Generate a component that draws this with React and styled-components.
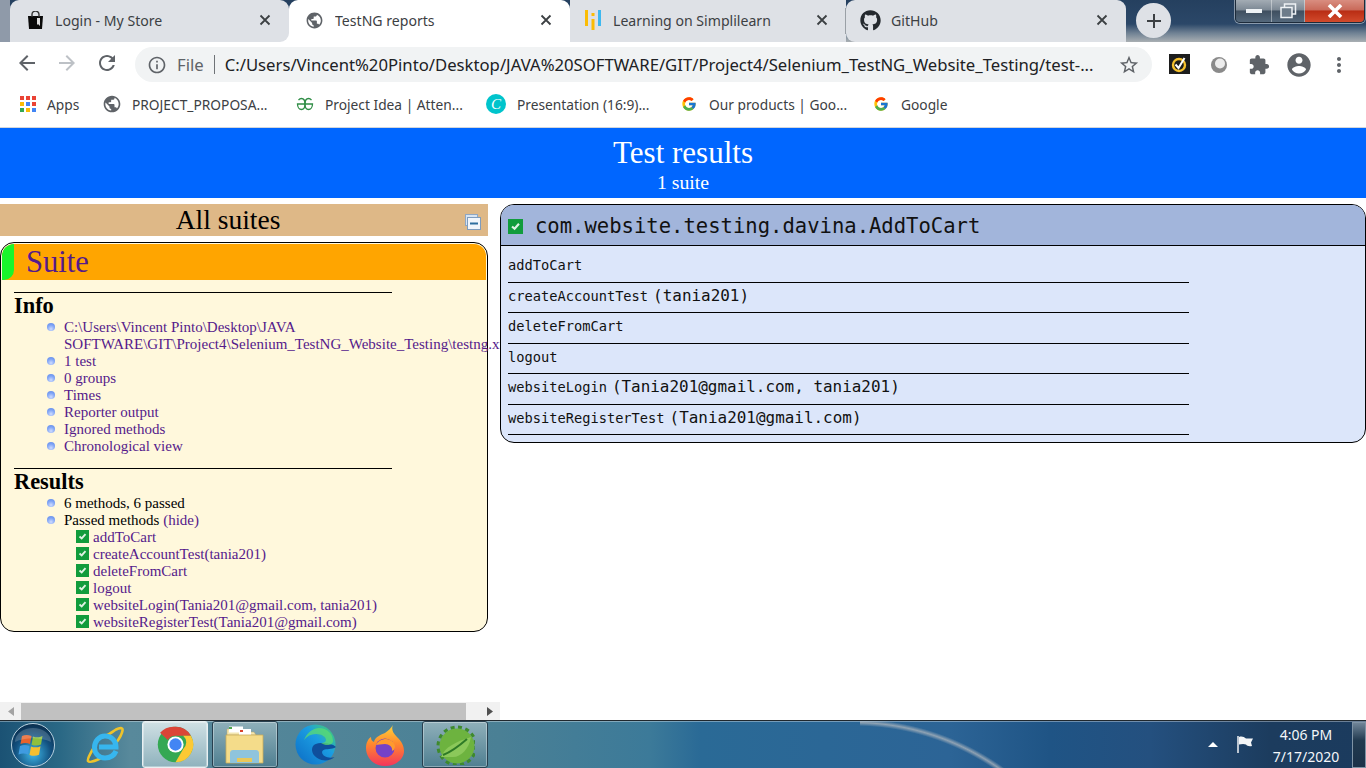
import React from "react";
import styled, { createGlobalStyle } from "styled-components";
import { FaGithub } from "react-icons/fa";
import { FcGoogle } from "react-icons/fc";

const Global = createGlobalStyle`
  html, body { margin: 0; padding: 0; background: #fff; overflow: hidden; }
  * { box-sizing: border-box; }
`;

const PATHS = {
  back: "M20 11H7.83l5.59-5.59L12 4l-8 8 8 8 1.41-1.41L7.83 13H20v-2z",
  refresh:
    "M17.65 6.35C16.2 4.9 14.21 4 12 4c-4.42 0-7.99 3.58-7.99 8s3.57 8 7.99 8c3.73 0 6.84-2.55 7.73-6h-2.08c-.82 2.33-3.04 4-5.65 4-3.31 0-6-2.69-6-6s2.69-6 6-6c1.66 0 3.14.69 4.22 1.78L13 11h7V4l-2.35 2.35z",
  info: "M11 7h2v2h-2zm0 4h2v6h-2zm1-9C6.48 2 2 6.48 2 12s4.48 10 10 10 10-4.48 10-10S17.52 2 12 2zm0 18c-4.41 0-8-3.59-8-8s3.59-8 8-8 8 3.59 8 8-3.59 8-8 8z",
  star: "M22 9.24l-7.19-.62L12 2 9.19 8.63 2 9.24l5.46 4.73L5.82 21 12 17.27 18.18 21l-1.63-7.03L22 9.24zM12 15.4l-3.76 2.27 1-4.28-3.32-2.88 4.38-.38L12 6.1l1.71 4.04 4.38.38-3.32 2.88 1 4.28L12 15.4z",
  puzzle:
    "M20.5 11H19V7c0-1.1-.9-2-2-2h-4V3.5C13 2.12 11.88 1 10.5 1S8 2.12 8 3.5V5H4c-1.1 0-1.99.9-1.99 2v3.8H3.5c1.49 0 2.7 1.21 2.7 2.7s-1.21 2.7-2.7 2.7H2V20c0 1.1.9 2 2 2h3.8v-1.5c0-1.49 1.21-2.7 2.7-2.7 1.49 0 2.7 1.21 2.7 2.7V22H17c1.1 0 2-.9 2-2v-4h1.5c1.38 0 2.5-1.12 2.5-2.5S21.88 11 20.5 11z",
  account:
    "M12 2C6.48 2 2 6.48 2 12s4.48 10 10 10 10-4.48 10-10S17.52 2 12 2zm0 3c1.66 0 3 1.34 3 3s-1.34 3-3 3-3-1.34-3-3 1.34-3 3-3zm0 14.2c-2.5 0-4.71-1.28-6-3.22.03-1.99 4-3.08 6-3.08 1.99 0 5.97 1.09 6 3.08-1.29 1.94-3.5 3.22-6 3.22z",
  globe:
    "M12 2C6.48 2 2 6.48 2 12s4.48 10 10 10 10-4.48 10-10S17.52 2 12 2zm-1 17.93c-3.95-.49-7-3.85-7-7.93 0-.62.08-1.21.21-1.79L9 15v1c0 1.1.9 2 2 2v1.93zm6.9-2.54c-.26-.81-1-1.39-1.9-1.39h-1v-3c0-.55-.45-1-1-1H8v-2h2c.55 0 1-.45 1-1V7h2c1.1 0 2-.9 2-2v-.41c2.93 1.19 5 4.06 5 7.41 0 2.08-.8 3.97-2.1 5.39z",
  dots: "M12 8c1.1 0 2-.9 2-2s-.9-2-2-2-2 .9-2 2 .9 2 2 2zm0 2c-1.1 0-2 .9-2 2s.9 2 2 2 2-.9 2-2-.9-2-2-2zm0 6c-1.1 0-2 .9-2 2s.9 2 2 2 2-.9 2-2-.9-2-2-2z",
};

const Mat = ({ name, size = 24, color = "#5f6368", flip }) => (
  <svg width={size} height={size} viewBox="0 0 24 24" fill={color} style={flip ? { transform: "scaleX(-1)" } : undefined}>
    <path d={PATHS[name]} />
  </svg>
);

const CloseX = () => (
  <svg width="12" height="12" viewBox="0 0 12 12" stroke="#3c4043" strokeWidth="1.8" fill="none">
    <path d="M1.5 1.5l9 9M10.5 1.5l-9 9" />
  </svg>
);

const BagIcon = () => (
  <svg width="17" height="18" viewBox="0 0 17 18">
    <path d="M1 5h15l-1 13H2z" fill="#0a0a0a" />
    <path d="M5 6V3.5a3.5 3.5 0 0 1 7 0V6" fill="none" stroke="#333" strokeWidth="1.4" />
    <path d="M10 7h3v8l-2-2-1 1z" fill="#ddd" />
  </svg>
);

const SimplilearnIcon = () => (
  <svg width="16" height="20" viewBox="0 0 16 20">
    <rect x="0" y="0" width="3" height="16" fill="#fbbc05" />
    <rect x="6.5" y="9" width="3" height="11" fill="#fbbc05" />
    <rect x="6.5" y="3" width="3" height="3" fill="#fbbc05" />
    <rect x="13" y="0" width="3" height="16" fill="#3db8f0" />
  </svg>
);

const AppsIcon = () => (
  <svg width="16" height="16" viewBox="0 0 16 16">
    {["#ea4335", "#ea4335", "#ea4335", "#fbbc05", "#4285f4", "#ea4335", "#34a853", "#fbbc05", "#4285f4"].map((c, i) => (
      <rect key={i} x={(i % 3) * 6} y={Math.floor(i / 3) * 6} width="4" height="4" fill={c} />
    ))}
  </svg>
);

const GfgIcon = () => (
  <svg width="18" height="18" viewBox="0 0 18 18" fill="none" stroke="#2f8d46" strokeWidth="1.3">
    <path d="M9 9H1.5c0 3 1.700 5.500 4 5.500 1.800 0 3.500-2 3.500-5.500 0-3.500-1.500-5.500-3.500-5.500-1.300 0-2.200.6-3 1.700" />
    <path d="M9 9h7.500c0 3-1.700 5.500-4 5.500-1.800 0-3.500-2-3.500-5.500 0-3.500 1.500-5.500 3.500-5.500 1.300 0 2.200.6 3 1.700" />
  </svg>
);

const NortonIcon = () => (
  <svg width="21" height="21" viewBox="0 0 21 21">
    <rect width="21" height="20" fill="#1c1c1c" />
    <circle cx="10" cy="11" r="6" fill="none" stroke="#f5c02c" strokeWidth="2.4" />
    <path d="M6.500 10.500l3 3.500 6-10" fill="none" stroke="#fff" strokeWidth="2" />
  </svg>
);

const SphereIcon = () => (
  <svg width="18" height="18" viewBox="0 0 18 18">
    <circle cx="9" cy="9" r="8" fill="#8a8a8a" />
    <circle cx="10" cy="7.500" r="5" fill="#ececec" />
  </svg>
);

const PassIcon = ({ size = 13 }) => (
  <svg width={size} height={size} viewBox="0 0 13 13">
    <rect width="13" height="13" fill="#119c3c" />
    <path d="M3.500 6.500l2.200 2L9.500 4.200" fill="none" stroke="#dff2e4" strokeWidth="1.900" />
  </svg>
);

const CollapseIcon = () => (
  <svg width="16" height="16" viewBox="0 0 16 16">
    <rect x="0.500" y="0.500" width="12" height="11" fill="#d7e4f2" stroke="#8fa7c3" />
    <rect x="2.500" y="3.500" width="13" height="12" fill="#f2f6fb" stroke="#7f9cbd" />
    <rect x="5" y="8.500" width="8" height="2" fill="#2f6f9f" />
  </svg>
);

const WindowsOrb = () => (
  <svg width="46" height="46" viewBox="0 0 46 46">
    <defs>
      <radialGradient id="orb" cx="50%" cy="70%" r="70%">
        <stop offset="0" stopColor="#3fb8e8" />
        <stop offset="0.6" stopColor="#12507f" />
        <stop offset="1" stopColor="#0a2c4a" />
      </radialGradient>
    </defs>
    <circle cx="23" cy="23" r="21.500" fill="url(#orb)" stroke="#b9d2e0" strokeWidth="1" />
    <path d="M12 14c3-1.500 6-1.500 9.500 0l-1.500 8c-3-1.200-6-1.200-9.500 0z" fill="#e8632c" />
    <path d="M23 14.500c3 1.200 6.500 1.200 9.500-.5l-1.500 8.500c-3 1.400-6 1.400-9.500.2z" fill="#8fc03c" />
    <path d="M10 24c3-1.200 6-1.200 9.500 0l-1.500 8.500c-3-1.400-6-1.400-9.500 0z" fill="#3f9be0" />
    <path d="M21 24.500c3 1.200 6.500 1.200 9.500-.3l-1.500 8.500c-3 1.500-6 1.500-9.500.2z" fill="#f5bf2e" />
    <path d="M5 20a18 14 0 0 1 36 0c-10-5-26-5-36 0z" fill="#fff" opacity="0.18" />
  </svg>
);

const IeIcon = () => (
  <svg width="38" height="40" viewBox="0 0 38 40" fill="none">
    <path d="M19 11c4-1 7-4 11-6.500 4-2 7-2 6.500 1C36 9 33 14 30 18M7 24c-3 5-6 10-5 12 1.500 2 7 0 13-3" stroke="#eec32b" strokeWidth="2.600" />
    <path d="M30 26c-2 5-6.500 7-11 7-6 0-10.500-4.500-10.500-10.500S13 11 19 11s11 4.500 11 11H13" stroke="#37b6ee" strokeWidth="5" />
  </svg>
);

const ChromeIcon = () => (
  <svg width="37" height="37" viewBox="0 0 48 48">
    <circle cx="24" cy="24" r="23" fill="#34a853" />
    <path d="M24 1a23 23 0 0 1 20 11.500H24a11.500 11.500 0 0 0-10 5.800L4 8.800A23 23 0 0 1 24 1z" fill="#db4437" />
    <path d="M44 12.500A23 23 0 0 1 24 47l10-17.200a11.500 11.500 0 0 0 0-17.300z" fill="#fcc934" />
    <circle cx="24" cy="24" r="10.500" fill="#fff" />
    <circle cx="24" cy="24" r="8" fill="#4285f4" />
  </svg>
);

const FolderIcon = () => (
  <svg width="40" height="40" viewBox="0 0 40 40">
    <path d="M2 4h14l3 3h10l2 3H2z" fill="#f3e6b0" stroke="#b9a468" strokeWidth="0.500" />
    <rect x="4" y="1.500" width="14" height="6" fill="#fff" />
    <rect x="14" y="4" width="12" height="6" fill="#fff" />
    <rect x="4" y="2" width="3" height="2" fill="#4da64a" />
    <rect x="15" y="5" width="3" height="2" fill="#d8432e" />
    <path d="M1 10h37v28H1z" fill="#f4dc8a" stroke="#c9ac5c" strokeWidth="0.800" />
    <path d="M5 28c0-1.500 1-3 3-3h23c2 0 3 1.500 3 3v10H5z" fill="#8fc4dc" />
    <rect x="12" y="33" width="15" height="4" fill="#e9c85a" />
  </svg>
);

const EdgeIcon = () => (
  <svg width="41" height="41" viewBox="0 0 41 41">
    <defs>
      <linearGradient id="edgeA" x1="0" y1="1" x2="1" y2="0">
        <stop offset="0" stopColor="#0c6bc4" />
        <stop offset="0.6" stopColor="#1b9de2" />
        <stop offset="1" stopColor="#4fd65d" />
      </linearGradient>
    </defs>
    <circle cx="20.500" cy="20.500" r="20" fill="url(#edgeA)" />
    <path d="M41 23c-3-3-9-4-15-4-4 0-7 1-8.500 4-2 5 2 11 9 13 5 1 10 0 13-3-3 1-7 1-10-1-3-2-3-5-1-6 3-1.500 8 0 12.500-3z" fill="#0f4f9c" />
    <path d="M38 17c0 5-8 5-12 2 3 0 5-1 5-3 0-3-4-6-10-6-5 0-9 2-12 6 3-8 10-12 15-12 8 0 14 6 14 13z" fill="#5ee06c" opacity="0.700" />
  </svg>
);

const FirefoxIcon = () => (
  <svg width="40" height="42" viewBox="0 0 40 42">
    <defs>
      <linearGradient id="fx" x1="0.500" y1="0" x2="0.500" y2="1">
        <stop offset="0" stopColor="#ffd43b" />
        <stop offset="0.450" stopColor="#ff8a2e" />
        <stop offset="1" stopColor="#f3355c" />
      </linearGradient>
    </defs>
    <path d="M28 1c-2 4 0 8 4 12 5 5 7 9 7 14 0 8-8 15-19 15C9 42 1 34 1 24c0-5 2-9 5-11 0 3 1 4 3 5 1-5 6-7 11-9 3-2 6-5 8-8z" fill="url(#fx)" />
    <circle cx="20" cy="24" r="9.500" fill="#7542c7" />
    <path d="M11 21c2-4 6-6 10-6 5 0 9 4 9 8 0 2-1 3-3 4 1-4-3-7-7-7-4 0-7 1-9 1z" fill="#ff9a2e" />
  </svg>
);

const SpringIcon = () => (
  <svg width="40" height="40" viewBox="0 0 40 40">
    <circle cx="22" cy="21" r="17.500" fill="#6db33f" />
    <circle cx="22" cy="21" r="19" fill="none" stroke="#3e8a2c" strokeWidth="3" strokeDasharray="4 3.500" />
    <path d="M6 32c4-10 14-15 30-20-2 12-10 20-18 20-4 0-8 0-12 0z" fill="#8bc85a" />
    <path d="M8 30c8-3 16-9 24-16" stroke="#2e7a26" strokeWidth="2" fill="none" />
  </svg>
);

const FlagIcon = () => (
  <svg width="19" height="19" viewBox="0 0 19 19">
    <path d="M2 1v17" stroke="#fff" strokeWidth="1.400" />
    <path d="M3 2c3-1 5 0 7 1.500h7l-2 4 1 3.500c-3 .5-5 0-6-1.500-2-1-5-.5-7 0z" fill="#f4f6f8" />
  </svg>
);

const Page = styled.div`
  width: 1366px;
  height: 768px;
  display: flex;
  flex-direction: column;
  overflow: hidden;
  background: #fff;
`;

const TabStrip = styled.div`
  height: 42px;
  flex: none;
  display: flex;
  padding-left: 10px;
  isolation: isolate;
  background:
    linear-gradient(90deg, #8f9aa9 0, #8f9aa9 10px, transparent 10px),
    linear-gradient(180deg, #25405f 0, #2b4768 24px, #6f8193 33px, #a9afb3 42px);
`;

const Tab = styled.div`
  position: relative;
  flex: none;
  width: ${(p) => p.$width}px;
  display: flex;
  align-items: center;
  gap: ${(p) => p.$gap || 12}px;
  padding: 0 18px 2px ${(p) => p.$pad || 16}px;
  border-radius: 9px 9px ${(p) => (p.$active ? "0 0" : p.$round || "0 0")};
  background: ${(p) => (p.$active ? "#fff" : "#dee1e6")};
  ${(p) => !p.$active && "z-index: 1;"}
  ${(p) =>
    p.$active &&
    `&::before, &::after { content: ""; position: absolute; bottom: 0; width: 10px; height: 10px; background: #fff; z-index: -1; }
     &::before { left: -9px; }
     &::after { right: -9px; }`}
  ${(p) =>
    p.$divider &&
    `&::before { content: ""; position: absolute; left: -1px; top: 8px; height: 26px; width: 1px; background: #9aa0a6; }`}
`;

const TabTitle = styled.span`
  flex: 1;
  font: 14.100px "Noto Sans", sans-serif;
  color: #3c4043;
  white-space: nowrap;
  overflow: hidden;
`;

const NewTab = styled.div`
  width: 35px;
  height: 35px;
  margin: 3px 0 0 10px;
  flex: none;
  border-radius: 50%;
  background: #dee1e6;
  display: flex;
  align-items: center;
  justify-content: center;
  color: #3c4043;
`;

const WindowButtons = styled.div`
  margin-left: auto;
  margin-right: 1px;
  width: 130px;
  height: 23px;
  flex: none;
  display: grid;
  grid-template-columns: 36px 33px 61px;
  border: 1px solid #1d2b3a;
  border-top: 0;
  border-radius: 0 0 5px 5px;
  overflow: hidden;
  box-shadow: 0 0 0 1px rgba(255, 255, 255, 0.45);
`;

const WindowButton = styled.div`
  display: flex;
  align-items: center;
  justify-content: center;
  border-right: 1px solid rgba(255, 255, 255, 0.4);
  background: ${(p) =>
    p.$close
      ? "linear-gradient(180deg, #d98d80 0, #c96a5a 45%, #b92d14 50%, #d24a2c 100%)"
      : "linear-gradient(180deg, #a3acb4 0, #7c8894 45%, #3f4f60 50%, #54687b 100%)"};
`;

const Toolbar = styled.div`
  height: 42px;
  flex: none;
  display: flex;
  align-items: center;
  padding: 0 0 0 15px;
  background: #fff;
`;

const NavButton = styled.div`
  width: 40px;
  display: flex;
  justify-content: flex-start;
  flex: none;
`;

const Omnibox = styled.div`
  width: 1017px;
  height: 35px;
  margin: 3px 0 0 0;
  flex: none;
  display: flex;
  align-items: center;
  padding: 0 12px 0 12px;
  border-radius: 18px;
  background: #f1f3f4;
  font: 16.700px "Noto Sans", sans-serif;
  white-space: nowrap;
`;

const Scheme = styled.span`
  color: #5f6368;
  margin-left: 10px;
`;

const SchemeBar = styled.span`
  width: 1px;
  height: 19px;
  margin: 0 10px 0 10px;
  background: #6f7377;
`;

const Address = styled.span`
  flex: 1;
  color: #202124;
  overflow: hidden;
`;

const ToolActions = styled.div`
  flex: none;
  display: grid;
  grid-template-columns: repeat(5, 40px);
  justify-items: center;
  align-items: center;
  padding: 3px 0 0 7px;
`;

const Bookmarks = styled.div`
  height: 44px;
  flex: none;
  display: flex;
  align-items: center;
  padding: 0 0 3px 20px;
  background: #fff;
  border-bottom: 1px solid #d2d6dc;
`;

const Bookmark = styled.div`
  display: flex;
  align-items: center;
  gap: ${(p) => p.$gap || 11}px;
  width: ${(p) => p.$width}px;
  flex: none;
  font: 13.750px "Noto Sans", sans-serif;
  color: #3c4043;
  white-space: nowrap;
`;

const CanvaBadge = styled.span`
  width: 20px;
  height: 20px;
  border-radius: 50%;
  background: #00c4cc;
  color: #fff;
  font: italic 15px "Liberation Serif", serif;
  display: flex;
  align-items: center;
  justify-content: center;
`;

const Report = styled.div`
  flex: 1;
  min-height: 0;
  display: flex;
  flex-direction: column;
  font-family: "Liberation Serif", serif;
`;

const Banner = styled.header`
  height: 70px;
  flex: none;
  padding-top: 6px;
  background: #0066ff;
  color: #fff;
  text-align: center;
`;

const BannerTitle = styled.div`
  font-size: 31px;
  line-height: 38px;
`;

const BannerSub = styled.div`
  font-size: 19.800px;
  line-height: 21px;
`;

const Columns = styled.div`
  flex: 1;
  min-height: 0;
  display: flex;
`;

const LeftColumn = styled.div`
  width: 500px;
  flex: none;
  display: flex;
  flex-direction: column;
  padding-top: 6px;
`;

const Scroller = styled.div`
  flex: 1;
  min-height: 0;
  overflow: hidden;
`;

const AllSuites = styled.div`
  width: 488px;
  height: 32px;
  display: flex;
  align-items: center;
  background: #deb887;
  font-size: 27.500px;
`;

const AllSuitesTitle = styled.span`
  flex: 1;
  text-align: center;
`;

const CollapseSlot = styled.span`
  width: 32px;
  flex: none;
  display: flex;
  padding: 3px 0 0 9px;
`;

const SuitePanel = styled.div`
  width: 488px;
  height: 390px;
  margin-top: 6px;
  padding: 1px;
  border: 1px solid #000;
  border-radius: 14px;
  background: #fff8dc;
  font-size: 15px;
  line-height: 17px;
`;

const SuiteHeader = styled.div`
  height: 36px;
  display: flex;
  border-radius: 12px 12px 0 0;
  background: #ffa500;
  overflow: hidden;
`;

const SuiteMark = styled.span`
  width: 12px;
  flex: none;
  border-radius: 10px 0 10px 0;
  background: #19f52b;
`;

const SuiteName = styled.span`
  margin-left: 12px;
  font-size: 30.600px;
  line-height: 36px;
  color: #551a8b;
`;

const Section = styled.section`
  padding-left: 12px;
`;

const Rule = styled.hr`
  width: 378px;
  height: 1px;
  margin: ${(p) => p.$top}px 0 0;
  border: 0;
  background: #000;
`;

const SectionTitle = styled.div`
  height: 26px;
  font-size: 22.400px;
  font-weight: bold;
  line-height: 26px;
`;

const Bullets = styled.ul`
  margin: 0;
  padding: 0 0 0 50px;
  list-style: none;
`;

const Bullet = styled.li`
  position: relative;
  color: ${(p) => (p.$plain ? "#000" : "#551a8b")};

  &::before {
    content: "";
    position: absolute;
    left: -17px;
    top: 4px;
    width: 8px;
    height: 8px;
    border-radius: 50%;
    background: radial-gradient(circle at 50% 75%, #cfdcff 0, #7ea3f5 55%, #5f8ae8 100%);
  }
`;

const Link = styled.span`
  color: #551a8b;
`;

const Methods = styled.div`
  padding-left: 62px;
`;

const Method = styled.div`
  display: flex;
  align-items: center;
  gap: 4px;
  height: 17px;
  color: #551a8b;
  white-space: nowrap;

  svg {
    margin-top: -3px;
  }
`;

const ScrollBar = styled.div`
  height: 18px;
  flex: none;
  display: flex;
  align-items: stretch;
  padding-top: 1px;
  background: #f1f1f1;
`;

const ScrollArrow = styled.div`
  width: 21px;
  flex: none;
  display: flex;
  align-items: center;
  justify-content: center;
`;

const ScrollThumb = styled.div`
  width: 445px;
  flex: none;
  background: #c1c1c1;
`;

const ScrollTrack = styled.div`
  flex: 1;
  display: flex;
  justify-content: flex-end;
`;

const RightColumn = styled.div`
  flex: 1;
  min-width: 0;
  padding-top: 6px;
`;

const ClassPanel = styled.div`
  height: 239px;
  border: 1px solid #000;
  border-radius: 14px;
  overflow: hidden;
  background: #dce6fa;
  font-family: "DejaVu Sans Mono", monospace;
  color: #111;
`;

const ClassHeader = styled.div`
  height: 41px;
  display: flex;
  align-items: center;
  gap: 12px;
  padding: 2px 0 0 7px;
  background: #a2b5db;
  border-bottom: 1px solid #000;
  font-size: 20.550px;
`;

const ClassRows = styled.div`
  padding: 6.200px 0 0 7px;
`;

const ClassRow = styled.div`
  width: 681px;
  height: 30.500px;
  display: flex;
  align-items: baseline;
  gap: 5px;
  padding-top: 2px;
  border-bottom: 1px solid #000;
  font-size: 13.700px;
  line-height: 22px;
`;

const Params = styled.span`
  font-size: 15.950px;
`;

const Taskbar = styled.footer`
  height: 48px;
  flex: none;
  display: flex;
  align-items: center;
  border-top: 1px solid #20282e;
  box-shadow: inset 0 1px 0 rgba(255, 255, 255, 0.35);
  background:
    radial-gradient(circle at -6px 254px, transparent 249px, rgba(195, 195, 195, 0.65) 252.500px, transparent 256px) 860px 0 / 200px 100% no-repeat,
    linear-gradient(90deg, #1b5274 0, #2a6885 60px, #58899b 130px, #4a8095 500px, #3c7a99 650px, #2a6a96 700px, #2c6496 950px, #1f5485 1050px, #24507f 1150px, #1c3c5e 1270px, #1b3b5e 1366px);
`;

const StartOrb = styled.div`
  width: 72px;
  flex: none;
  display: flex;
  padding-left: 10px;
`;

const TaskSlot = styled.div`
  width: 66px;
  height: 47px;
  margin-right: 4px;
  flex: none;
  display: flex;
  align-items: center;
  justify-content: center;
  border-radius: 3px;
  ${(p) =>
    p.$open &&
    `border: 1px solid ${p.$front ? "#e8f0f2" : "#27404f"};
     box-shadow: inset 0 0 0 1px rgba(255,255,255,0.35);
     background: linear-gradient(180deg, ${p.$front ? "#cfe0e4, #8fb2bd" : "#8fb0ba, #4f7f91"});`}
`;

const Tray = styled.div`
  margin-left: auto;
  display: flex;
  align-items: center;
  height: 100%;
`;

const TrayArrow = styled.span`
  width: 0;
  height: 0;
  margin-right: 18px;
  border-left: 5px solid transparent;
  border-right: 5px solid transparent;
  border-bottom: 5px solid #fff;
`;

const Clock = styled.div`
  width: 92px;
  margin-left: 5px;
  padding-top: 3px;
  color: #f4f7fa;
  font: 14px/22px "Noto Sans", sans-serif;
  text-align: center;
`;

const ShowDesktop = styled.div`
  width: 14px;
  height: 46px;
  margin-left: 0;
  border: 1px solid #7f93a5;
  background: linear-gradient(180deg, #6f8497, #21394f 40%, #1b3148);
`;

const passed = [
  "addToCart",
  "createAccountTest(tania201)",
  "deleteFromCart",
  "logout",
  "websiteLogin(Tania201@gmail.com, tania201)",
  "websiteRegisterTest(Tania201@gmail.com)",
];

const rows = [
  { name: "addToCart" },
  { name: "createAccountTest", params: "(tania201)" },
  { name: "deleteFromCart" },
  { name: "logout" },
  { name: "websiteLogin", params: "(Tania201@gmail.com, tania201)" },
  { name: "websiteRegisterTest", params: "(Tania201@gmail.com)" },
];

export default function App() {
  return (
    <Page>
      <Global />
      <TabStrip>
        <Tab $width={279} $pad={17} $gap={11} $round="9px 0">
          <BagIcon />
          <TabTitle>Login - My Store</TabTitle>
          <CloseX />
        </Tab>
        <Tab $width={281} $active $gap={11}>
          <Mat name="globe" size={19} />
          <TabTitle>TestNG reports</TabTitle>
          <CloseX />
        </Tab>
        <Tab $width={276} $pad={15} $round="0 0 0 9px">
          <SimplilearnIcon />
          <TabTitle>Learning on Simplilearn</TabTitle>
          <CloseX />
        </Tab>
        <Tab $width={280} $pad={14} $divider $gap={10} $round="0 9px">
          <FaGithub size={21} color="#24292e" />
          <TabTitle>GitHub</TabTitle>
          <CloseX />
        </Tab>
        <NewTab>
          <svg width="16" height="16" viewBox="0 0 16 16" stroke="#3c4043" strokeWidth="2">
            <path d="M8 1v14M1 8h14" />
          </svg>
        </NewTab>
        <WindowButtons>
          <WindowButton>
            <svg width="16" height="4"><rect width="16" height="4" fill="#eef2f5" /></svg>
          </WindowButton>
          <WindowButton>
            <svg width="17" height="16" viewBox="0 0 17 16" fill="none" stroke="#eef2f5" strokeWidth="1.500">
              <rect x="4.500" y="1" width="11" height="10" />
              <rect x="1" y="4.500" width="11" height="10" fill="#6d7c8a" />
            </svg>
          </WindowButton>
          <WindowButton $close>
            <svg width="16" height="14" viewBox="0 0 16 14" stroke="#fff" strokeWidth="3.600">
              <path d="M2 1l12 12M14 1L2 13" />
            </svg>
          </WindowButton>
        </WindowButtons>
      </TabStrip>

      <Toolbar>
        <NavButton><Mat name="back" /></NavButton>
        <NavButton><Mat name="back" flip color="#bdc1c6" /></NavButton>
        <NavButton><Mat name="refresh" /></NavButton>
        <Omnibox>
          <Mat name="info" size={20} />
          <Scheme>File</Scheme>
          <SchemeBar />
          <Address>C:/Users/Vincent%20Pinto/Desktop/JAVA%20SOFTWARE/GIT/Project4/Selenium_TestNG_Website_Testing/test-...</Address>
          <Mat name="star" size={22} />
        </Omnibox>
        <ToolActions>
          <NortonIcon />
          <SphereIcon />
          <Mat name="puzzle" size={22} />
          <Mat name="account" size={28} />
          <Mat name="dots" />
        </ToolActions>
      </Toolbar>

      <Bookmarks>
        <Bookmark $width={82}><AppsIcon />Apps</Bookmark>
        <Bookmark $width={194} $gap={10}><Mat name="globe" size={20} />PROJECT_PROPOSA...</Bookmark>
        <Bookmark $width={190} $gap={11}><GfgIcon />Project Idea | Atten...</Bookmark>
        <Bookmark $width={195} $gap={11}><CanvaBadge>C</CanvaBadge>Presentation (16:9)...</Bookmark>
        <Bookmark $width={192} $gap={12}><FcGoogle size={16} />Our products | Goo...</Bookmark>
        <Bookmark $gap={12}><FcGoogle size={16} />Google</Bookmark>
      </Bookmarks>

      <Report>
        <Banner>
          <BannerTitle>Test results</BannerTitle>
          <BannerSub>1 suite</BannerSub>
        </Banner>
        <Columns>
          <LeftColumn>
            <Scroller>
              <AllSuites>
                <AllSuitesTitle>All suites</AllSuitesTitle>
                <CollapseSlot><CollapseIcon /></CollapseSlot>
              </AllSuites>
              <SuitePanel>
                <SuiteHeader>
                  <SuiteMark />
                  <SuiteName>Suite</SuiteName>
                </SuiteHeader>
                <Section>
                  <Rule $top={12} />
                  <SectionTitle>Info</SectionTitle>
                  <Bullets>
                    <Bullet>C:\Users\Vincent Pinto\Desktop\JAVA SOFTWARE\GIT\Project4\Selenium_TestNG_Website_Testing\testng.xml</Bullet>
                    <Bullet>1 test</Bullet>
                    <Bullet>0 groups</Bullet>
                    <Bullet>Times</Bullet>
                    <Bullet>Reporter output</Bullet>
                    <Bullet>Ignored methods</Bullet>
                    <Bullet>Chronological view</Bullet>
                  </Bullets>
                  <Rule $top={13} />
                  <SectionTitle>Results</SectionTitle>
                  <Bullets>
                    <Bullet $plain>6 methods, 6 passed</Bullet>
                    <Bullet $plain>Passed methods <Link>(hide)</Link></Bullet>
                  </Bullets>
                  <Methods>
                    {passed.map((m) => (
                      <Method key={m}>
                        <PassIcon />
                        {m}
                      </Method>
                    ))}
                  </Methods>
                </Section>
              </SuitePanel>
            </Scroller>
            <ScrollBar>
              <ScrollArrow>
                <svg width="6" height="9"><path d="M6 0v9L0 4.500z" fill="#a3a3a3" /></svg>
              </ScrollArrow>
              <ScrollThumb />
              <ScrollTrack>
                <ScrollArrow>
                  <svg width="6" height="9"><path d="M0 0v9l6-4.500z" fill="#505050" /></svg>
                </ScrollArrow>
              </ScrollTrack>
            </ScrollBar>
          </LeftColumn>
          <RightColumn>
            <ClassPanel>
              <ClassHeader>
                <PassIcon size={15} />
                com.website.testing.davina.AddToCart
              </ClassHeader>
              <ClassRows>
                {rows.map((r) => (
                  <ClassRow key={r.name}>
                    {r.name}
                    {r.params && <Params>{r.params}</Params>}
                  </ClassRow>
                ))}
              </ClassRows>
            </ClassPanel>
          </RightColumn>
        </Columns>
      </Report>

      <Taskbar>
        <StartOrb><WindowsOrb /></StartOrb>
        <TaskSlot><IeIcon /></TaskSlot>
        <TaskSlot $open $front><ChromeIcon /></TaskSlot>
        <TaskSlot $open><FolderIcon /></TaskSlot>
        <TaskSlot><EdgeIcon /></TaskSlot>
        <TaskSlot><FirefoxIcon /></TaskSlot>
        <TaskSlot $open><SpringIcon /></TaskSlot>
        <Tray>
          <TrayArrow />
          <FlagIcon />
          <Clock>
            4:06 PM
            <br />
            7/17/2020
          </Clock>
          <ShowDesktop />
        </Tray>
      </Taskbar>
    </Page>
  );
}
